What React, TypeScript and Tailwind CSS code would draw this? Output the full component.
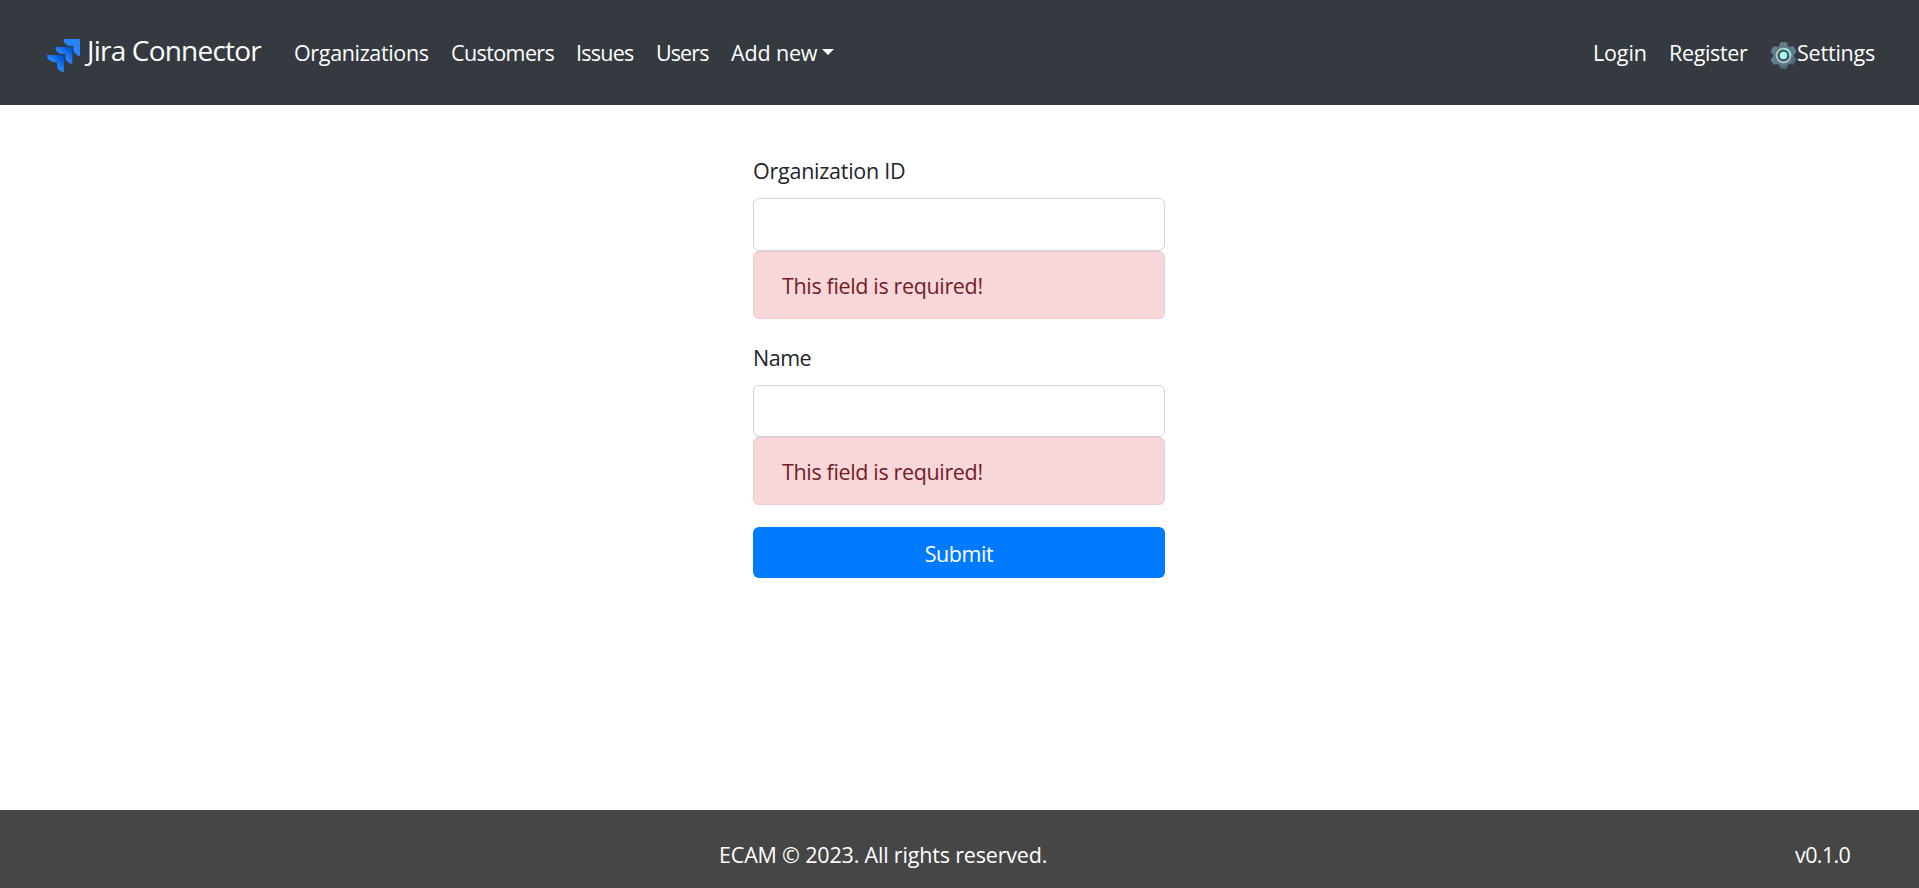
import React from "react";

function JiraLogo() {
  return (
    <svg viewBox="0 0 33 33" className="mt-[39px] h-[33px] w-[33px] shrink-0">
      <defs>
        <linearGradient id="mid" x1="25" y1="8" x2="17" y2="17" gradientUnits="userSpaceOnUse">
          <stop offset="0.18" stopColor="#0052cc" />
          <stop offset="1" stopColor="#2684ff" />
        </linearGradient>
        <linearGradient id="low" x1="17" y1="16" x2="8" y2="25" gradientUnits="userSpaceOnUse">
          <stop offset="0.18" stopColor="#0052cc" />
          <stop offset="1" stopColor="#2684ff" />
        </linearGradient>
      </defs>
      <path
        fill="#2684ff"
        d="M32.2 0H16.4a7.1 7.1 0 0 0 7.1 7.1h2.9v2.8a7.1 7.1 0 0 0 7.1 7.1V1.2A1.2 1.2 0 0 0 32.2 0Z"
      />
      <path
        fill="url(#mid)"
        d="M24.2 8H8.4a7.1 7.1 0 0 0 7.1 7.1h2.9v2.8a7.1 7.1 0 0 0 6.9 7.1V9.2A1.2 1.2 0 0 0 24.2 8Z"
      />
      <path
        fill="url(#low)"
        d="M15.8 16.1H0a7.1 7.1 0 0 0 7.1 7.1H10V26a7.1 7.1 0 0 0 7 7V17.3a1.2 1.2 0 0 0-1.2-1.2Z"
      />
    </svg>
  );
}

const teeth = [0, 60, 120, 180, 240, 300];

function Gear() {
  return (
    <svg viewBox="0 0 27 27" className="mt-[7px] h-[27px] w-[27px] shrink-0">
      {teeth.map((a) => (
        <path
          key={a}
          d="M10.2 0.8Q10.5 0.2 11.1 0.2H15.9Q16.5 0.2 16.8 0.8L18.6 6H8.4Z"
          fill={a > 60 && a < 240 ? "#50697a" : "#64808e"}
          transform={`rotate(${a} 13.5 13.5)`}
        />
      ))}
      <circle cx="13.5" cy="13.5" r="10.2" fill="#5d7b89" />
      <circle cx="13.5" cy="13.5" r="6.9" fill="#40545f" stroke="#b9c5ca" strokeWidth="1.8" />
      <path d="M13.5 6.6A6.9 6.9 0 0 1 20.4 13.5" fill="none" stroke="#8df0dd" strokeWidth="1.8" />
      <circle cx="13.5" cy="13.5" r="3.7" fill="#a5ffe9" />
    </svg>
  );
}

function Field({ label, inputClass, labelClass }: { label: string; inputClass: string; labelClass: string }) {
  return (
    <div className="flex flex-col">
      <label className={`mb-[11px] h-[34px] whitespace-nowrap ${labelClass}`}>{label}</label>
      <input className={`w-full rounded-[6px] border border-[#ced4da] bg-white px-4 outline-none ${inputClass}`} />
      <div className="h-[68px] rounded-[6px] border border-[#f5c6cb] bg-[#f8d7da] px-7 pt-[16px] tracking-[-0.35px] text-[#721c24]">
        This field is required!
      </div>
    </div>
  );
}

export default function App() {
  return (
    <div className="flex h-[888px] w-full flex-col overflow-hidden bg-white font-['Open_Sans','Noto_Sans',sans-serif] text-[21.5px] leading-[36px] text-[#212529]">
      <nav className="flex h-[105px] shrink-0 items-start whitespace-nowrap bg-[#343a40] text-white">
        <a className="flex w-[247px] pl-[47px]">
          <JiraLogo />
          <span className="ml-[7px] mt-[29px] text-[28px] leading-[42px] tracking-[-0.8px]">Jira Connector</span>
        </a>
        <div className="ml-[47px] mt-[35px] flex">
          <a className="w-[157px] tracking-[-0.35px]">Organizations</a>
          <a className="w-[125px] tracking-[-0.6px]">Customers</a>
          <a className="w-[80px] tracking-[-0.75px]">Issues</a>
          <a className="w-[75px] tracking-[-0.9px]">Users</a>
          <a className="flex w-[104px]">
            <span className="w-[91px] tracking-[-0.15px]">Add new</span>
            <span className="mt-[14px] h-0 w-0 border-x-[6px] border-t-[6px] border-x-transparent border-t-white" />
          </a>
        </div>
        <div className="ml-auto mr-[40px] mt-[35px] flex">
          <a className="w-[76px] tracking-[-0.15px]">Login</a>
          <a className="w-[101px] tracking-[-0.35px]">Register</a>
          <a className="flex w-[109px]">
            <Gear />
            <span className="tracking-[-0.2px]">Settings</span>
          </a>
        </div>
      </nav>

      <main className="flex flex-1 justify-center pr-px pt-[48px]">
        <form className="flex w-[412px] flex-col">
          <Field label="Organization ID" labelClass="tracking-[-0.25px]" inputClass="h-[53px]" />
          <div className="h-[21px]" />
          <Field label="Name" labelClass="tracking-[-0.5px]" inputClass="h-[52px]" />
          <button
            type="button"
            className="mt-[22px] h-[51px] rounded-[6px] bg-[#007bff] pt-[2px] tracking-[-0.45px] text-white"
          >
            Submit
          </button>
        </form>
      </main>

      <footer className="flex h-[78px] shrink-0 whitespace-nowrap bg-[#464646] pt-[27px] text-white">
        <span className="ml-[719px] w-[1076px] tracking-[-0.18px]">ECAM © 2023. All rights reserved.</span>
        <span className="tracking-[-0.6px]">v0.1.0</span>
      </footer>
    </div>
  );
}
